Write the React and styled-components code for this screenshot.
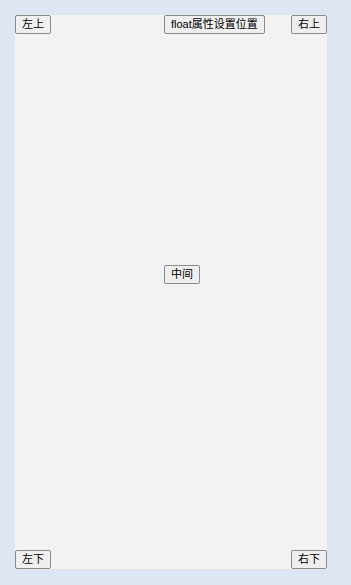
import React from 'react'
import styled, { createGlobalStyle } from 'styled-components'

const Global = createGlobalStyle`
  html, body {
    margin: 0;
    padding: 0;
    background: #dfe6f3;
    font-family: "Liberation Sans", "Noto Sans CJK SC", sans-serif;
  }
`

const Page = styled.div`
  width: 351px;
  height: 585px;
  padding: 15px 0 0 15px;
  box-sizing: border-box;
`

const Panel = styled.div`
  width: 313px;
  height: 555px;
  box-sizing: border-box;
  background: #f2f2f2;
  border-right: 1px solid #e2e4e8;
  border-bottom: 1px solid #e2e4e8;
  display: flex;
  flex-direction: column;
`

const Row = styled.div`
  display: flex;
  align-items: flex-start;
`

const Middle = styled.div`
  flex: 1;
  padding: 230px 0 0 149px;
`

const Button = styled.button`
  font-family: "Liberation Sans", "Noto Sans CJK SC", sans-serif;
  font-size: 11px;
  line-height: 13px;
  height: 19px;
  padding: 0 6px;
  margin: 0;
  color: #000;
  background: #efefef;
  border: 1px solid #8a8a8a;
  border-radius: 2px;
  white-space: nowrap;
  margin-left: ${({ $offset }) => $offset || '0'};
`

export default () => {
  return (
    <React.Fragment>
      <Global />
      <Page>
        <Panel>
          <Row>
            <Button>左上</Button>
            <Button $offset="113px">float属性设置位置</Button>
            <Button $offset="auto">右上</Button>
          </Row>
          <Middle>
            <Button>中间</Button>
          </Middle>
          <Row>
            <Button>左下</Button>
            <Button $offset="auto">右下</Button>
          </Row>
        </Panel>
      </Page>
    </React.Fragment>
  )
}
